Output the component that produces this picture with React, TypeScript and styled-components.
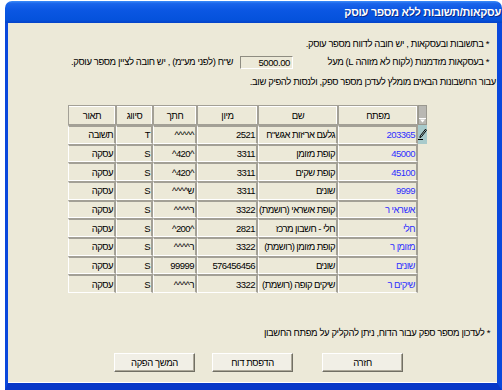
import styled, { createGlobalStyle } from 'styled-components';

const GlobalStyle = createGlobalStyle`
  html, body {
    margin: 0;
    padding: 0;
    background: #fff;
  }
  body {
    font-family: "Liberation Sans", Arial, sans-serif;
    font-size: 9.5px;
    letter-spacing: -0.4px;
    color: #000;
  }
`;

const Window = styled.div`
  margin-left: 5px;
  width: 497px;
  height: 390px;
  display: flex;
  flex-direction: column;
`;

const TitleBar = styled.div`
  flex: none;
  height: 22px;
  margin-top: 1px;
  border-radius: 7px 7px 0 0;
  background: linear-gradient(
    to bottom,
    #3c8cf8 0%,
    #1a64ea 12%,
    #0a56e2 45%,
    #0552dc 85%,
    #0442c8 100%
  );
  direction: rtl;
  display: flex;
  align-items: center;
  padding-right: 1px;
`;

const Title = styled.span`
  color: #fff;
  font-weight: bold;
  font-size: 11px;
  letter-spacing: -0.3px;
  text-shadow: 1px 1px 0 #0a2a8a;
`;

const Client = styled.div`
  flex: 1;
  background: #ece9d8;
  border-left: 3px solid #0a48dc;
  border-right: 5px solid #0a48dc;
  border-bottom: 7px solid #0838c8;
  box-shadow: inset 0 -1px 0 #fff;
  direction: rtl;
  display: flex;
  flex-direction: column;
  align-items: flex-start;
  padding: 14px 8px 0 0;
`;

const Line = styled.div<{ $top?: number; $right?: number }>`
  height: 14px;
  line-height: 14px;
  margin-top: ${(p) => p.$top ?? 0}px;
  margin-right: ${(p) => p.$right ?? 0}px;
  white-space: nowrap;
  display: flex;
  align-items: center;
`;

const FixedLabel = styled.span`
  width: 196px;
  flex: none;
`;

const AmountBox = styled.div`
  width: 53px;
  height: 13px;
  box-sizing: border-box;
  border-top: 1px solid #8e8c81;
  border-left: 1px solid #8e8c81;
  border-bottom: 1px solid #fff;
  border-right: 1px solid #fff;
  direction: ltr;
  text-align: right;
  padding-right: 2px;
  line-height: 11px;
  margin-left: 7px;
`;

const Grid = styled.div`
  margin-top: 16px;
  margin-right: 62px;
  display: grid;
  grid-template-columns: 9px 80px 80px 61px 44px 37px 48px;
  grid-template-rows: 20px;
  grid-auto-rows: 18.67px;
`;

const HeadCell = styled.div`
  box-sizing: border-box;
  border: 1px solid #a3a096;
  box-shadow: inset -1px 1px 0 #fff;
  display: flex;
  align-items: center;
  justify-content: center;
  padding-top: 1px;
`;

const SelectorHead = styled.div`
  box-sizing: border-box;
  background: #b9b8b3;
  border: 1px solid #9a988f;
  display: flex;
  align-items: flex-end;
  justify-content: center;
  padding-bottom: 1px;
`;

const SelectorCell = styled.div<{ $active?: boolean }>`
  box-sizing: border-box;
  background: ${(p) => (p.$active ? '#a8cacb' : 'transparent')};
  display: flex;
  align-items: center;
  justify-content: center;
`;

const Cell = styled.div<{ $link?: boolean }>`
  box-sizing: border-box;
  border-top: 2px solid #a3a096;
  border-right: 2px solid #a3a096;
  border-bottom: 1px solid #fff;
  border-left: 1px solid #fff;
  padding: 0 1px;
  letter-spacing: -0.55px;
  display: flex;
  align-items: center;
  white-space: nowrap;
  overflow: hidden;
  color: ${(p) => (p.$link ? '#2f2fff' : '#000')};
`;

const Note = styled.div`
  margin-top: 33px;
  margin-right: -1px;
  height: 14px;
  line-height: 14px;
  white-space: nowrap;
`;

const ButtonRow = styled.div`
  margin-top: 13px;
  margin-right: 86px;
  display: flex;
`;

const Button = styled.button<{ $gap?: number }>`
  width: 81px;
  height: 19px;
  margin-left: ${(p) => p.$gap ?? 0}px;
  padding: 0;
  font: inherit;
  letter-spacing: inherit;
  color: #000;
  background: #f1efe6;
  border: 1px solid;
  border-color: #fff #716f64 #716f64 #fff;
  box-shadow: inset -1px -1px 0 #aca899;
`;

const rows = [
  { key: '203365', name: 'גלעם אריזות אגש"ח', sort: '2521', cut: '^^^^^', cls: 'T', desc: 'תשובה' },
  { key: '45000', name: 'קופת מזומן', sort: '3311', cut: '^420^', cls: 'S', desc: 'עסקה' },
  { key: '45100', name: 'קופת שקים', sort: '3311', cut: '^420^', cls: 'S', desc: 'עסקה' },
  { key: '9999', name: 'שונים', sort: '3311', cut: 'ש^^^^', cls: 'S', desc: 'עסקה' },
  { key: 'אשראי ר', name: 'קופת אשראי (רושמת)', sort: '3322', cut: 'ר^^^^', cls: 'S', desc: 'עסקה' },
  { key: 'חלי', name: 'חלי - חשבון מרכז', sort: '2821', cut: '^200^', cls: 'S', desc: 'עסקה' },
  { key: 'מזומן ר', name: 'קופת מזומן (רושמת)', sort: '3322', cut: 'ר^^^^', cls: 'S', desc: 'עסקה' },
  { key: 'שונים', name: 'שונים', sort: '576456456', cut: '99999', cls: 'S', desc: 'עסקה' },
  { key: 'שיקים ר', name: 'שיקים קופה (רושמת)', sort: '3322', cut: 'ר^^^^', cls: 'S', desc: 'עסקה' },
];

const FilterIcon = () => (
  <svg width="7" height="5" viewBox="0 0 7 5">
    <path d="M0 0.5h7" stroke="#fff" strokeWidth="1" />
    <path d="M1 1.5h5l-2.5 3z" fill="#fff" />
  </svg>
);

const PencilIcon = () => (
  <svg width="9" height="12" viewBox="0 0 9 12">
    <path d="M7.5 1.2l1 1-5 6.5-1.6.9.4-1.8z" fill="none" stroke="#000" strokeWidth="1" />
    <path d="M0 11.5h5" stroke="#000" strokeWidth="1" />
  </svg>
);

const App = () => {
  return (
    <>
      <GlobalStyle />
      <Window>
        <TitleBar>
          <Title>עסקאות/תשובות ללא מספר עוסק</Title>
        </TitleBar>
        <Client>
          <Line>* בתשובות ובעסקאות , יש חובה לדווח מספר עוסק.</Line>
          <Line $top={4}>
            <FixedLabel>* בעסקאות מזדמנות (לקוח לא מזוהה L) מעל</FixedLabel>
            <AmountBox>5000.00</AmountBox>
            <span>ש"ח (לפני מע"מ) , יש חובה לציין מספר עוסק.</span>
          </Line>
          <Line $top={6} $right={-7}>
            עבור החשבונות הבאים מומלץ לעדכן מספר ספק, ולנסות להפיק שוב.
          </Line>
          <Grid>
            <SelectorHead>
              <FilterIcon />
            </SelectorHead>
            <HeadCell>מפתח</HeadCell>
            <HeadCell>שם</HeadCell>
            <HeadCell>מיון</HeadCell>
            <HeadCell>חתך</HeadCell>
            <HeadCell>סיווג</HeadCell>
            <HeadCell>תאור</HeadCell>
            {rows.map((row, i) => [
              <SelectorCell key={`s${i}`} $active={i === 0}>
                {i === 0 && <PencilIcon />}
              </SelectorCell>,
              <Cell key={`k${i}`} $link>{row.key}</Cell>,
              <Cell key={`n${i}`}>{row.name}</Cell>,
              <Cell key={`o${i}`}>{row.sort}</Cell>,
              <Cell key={`c${i}`}>{row.cut}</Cell>,
              <Cell key={`t${i}`}>{row.cls}</Cell>,
              <Cell key={`d${i}`}>{row.desc}</Cell>,
            ])}
          </Grid>
          <Note>* לעדכון מספר ספק עבור הדוח, ניתן להקליק על מפתח החשבון</Note>
          <ButtonRow>
            <Button $gap={29}>חזרה</Button>
            <Button $gap={17}>הדפסת דוח</Button>
            <Button>המשך הפקה</Button>
          </ButtonRow>
        </Client>
      </Window>
    </>
  );
};

export default App;
